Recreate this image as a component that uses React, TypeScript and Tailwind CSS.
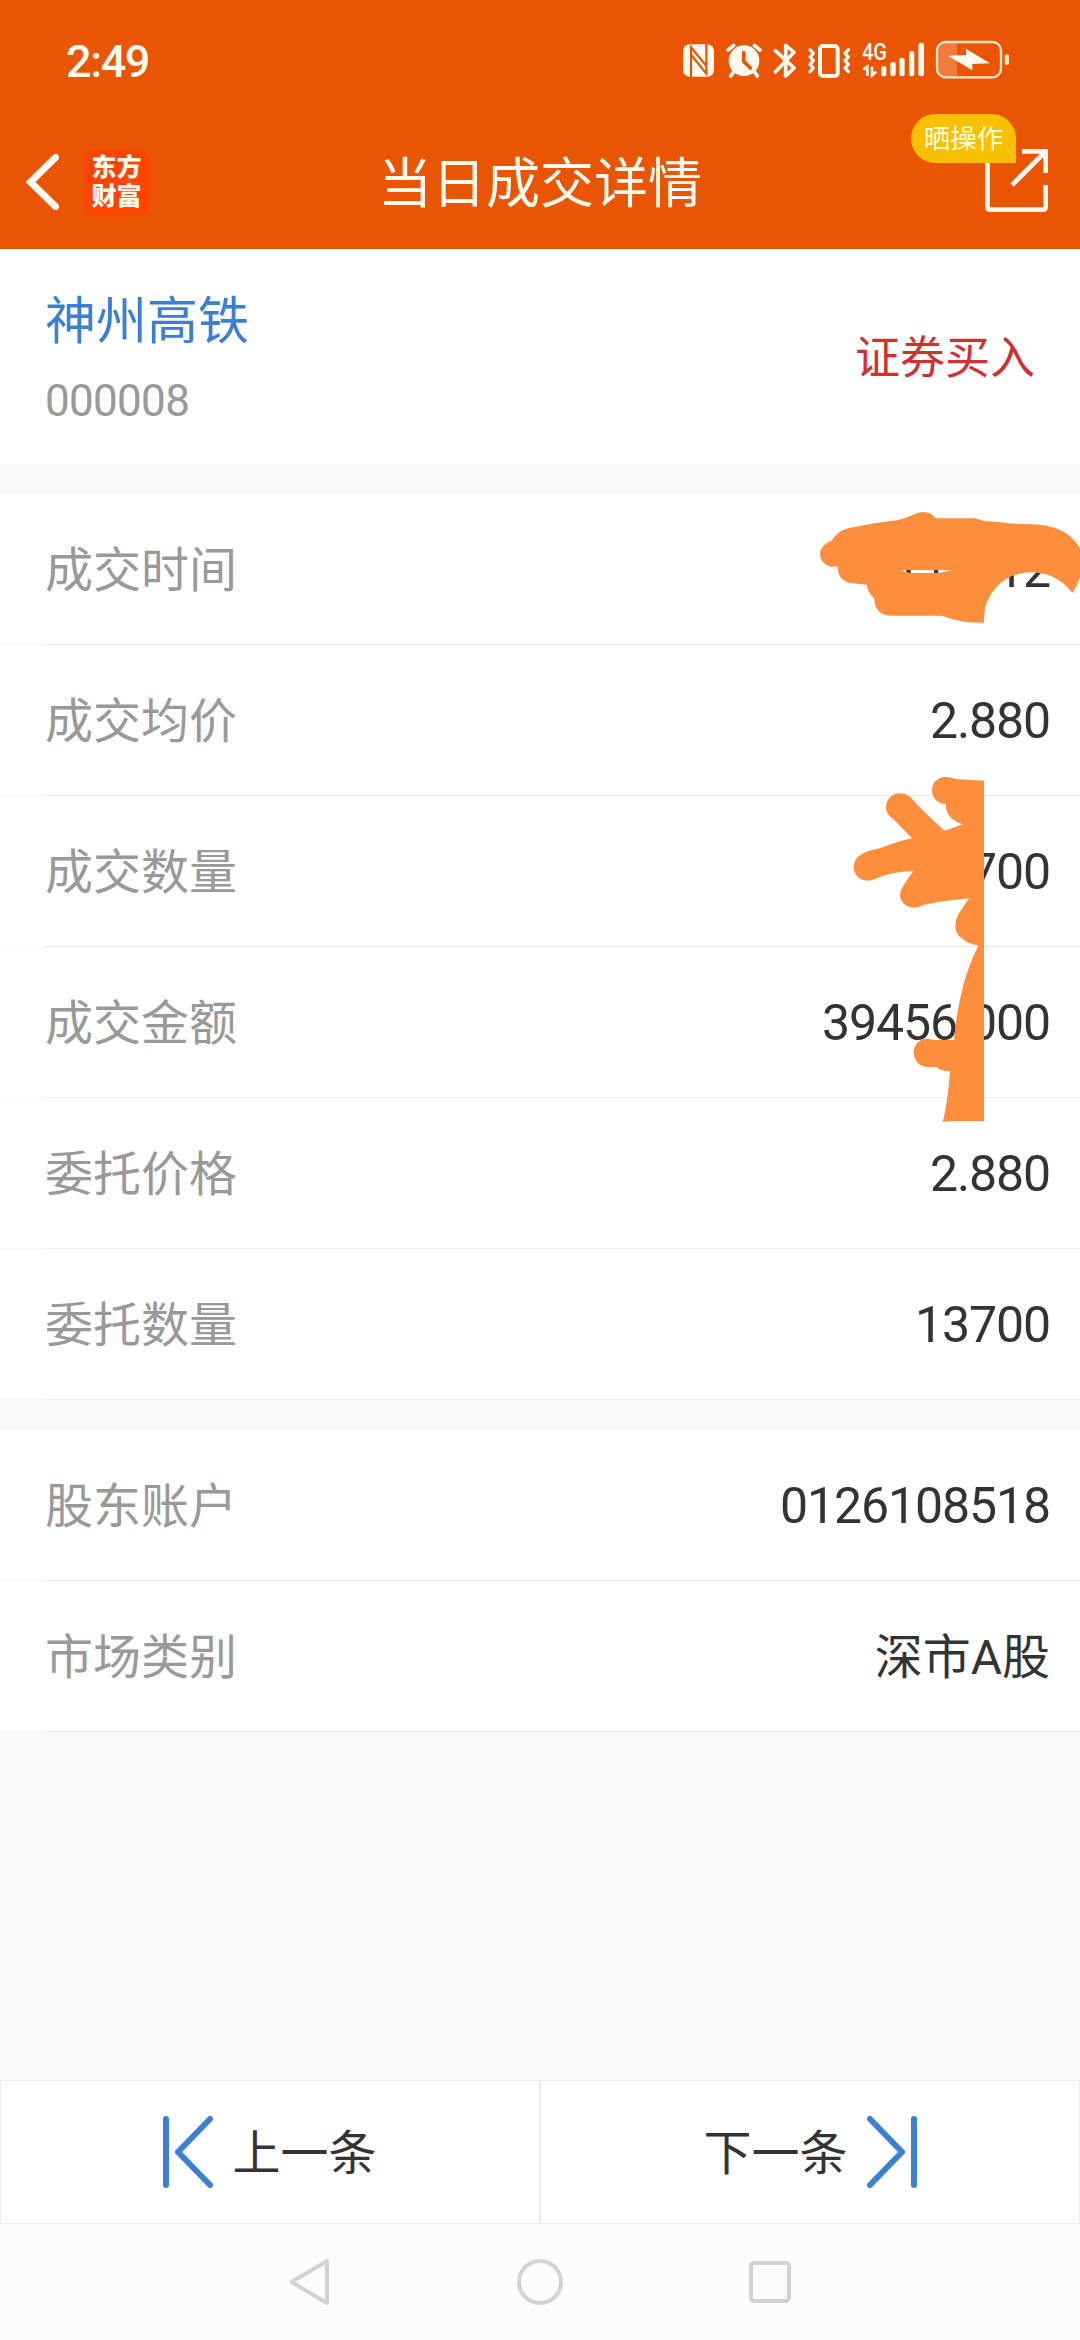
import type { ReactNode } from "react";
import clsx from "clsx";

const tradeRows = [
  { label: "成交时间", value: "11:05:12" },
  { label: "成交均价", value: "2.880" },
  { label: "成交数量", value: "13700" },
  { label: "成交金额", value: "39456.000" },
  { label: "委托价格", value: "2.880" },
  { label: "委托数量", value: "13700" },
];

const accountRows = [
  { label: "股东账户", value: "0126108518" },
  { label: "市场类别", value: "深市A股" },
];

const StatusIcons = () => (
  <div className="flex h-10 text-[#fffaf0]">
    {/* NFC */}
    <svg className="h-10 w-[38px]" viewBox="36 60 114 120">
      <rect x="39" y="73" width="93" height="97" rx="20" fill="currentColor" />
      <path d="M63 172V82l46 56V106M109 71v90L63 104V136" fill="none" stroke="#ea5504" strokeWidth="6.500" />
    </svg>
    {/* Alarm */}
    <svg className="h-10 w-12" viewBox="150 60 144 120">
      <circle cx="222" cy="122" r="46" fill="currentColor" />
      <path d="M174 90l17-14M270 90l-17-14M192 154l-10 14M252 154l10 14" stroke="currentColor" strokeWidth="11" strokeLinecap="round" />
      <path d="M221 98v26l20 20" fill="none" stroke="#ea5504" strokeWidth="11" strokeLinecap="round" />
    </svg>
    {/* Bluetooth */}
    <svg className="h-10 w-[34px]" viewBox="294 60 102 120">
      <path d="M316 92l56 52-25 24V76l25 21-56 59" fill="none" stroke="currentColor" strokeWidth="11" strokeLinecap="round" strokeLinejoin="round" />
    </svg>
    {/* Vibrate */}
    <svg className="h-10 w-[54px]" viewBox="396 60 162 120" fill="none" stroke="currentColor">
      <rect x="450" y="78" width="53" height="90" rx="9" strokeWidth="12" />
      <path d="M420 89l10 11-10 11 10 11-10 11 10 11-10 11M535 89l-10 11 10 11-10 11 10 11-10 11 10 11" strokeWidth="10" strokeLinecap="round" strokeLinejoin="round" />
    </svg>
    {/* Signal */}
    <svg className="h-10 w-[74px]" viewBox="558 60 222 120" fill="currentColor">
      <text x="576" y="119" fontSize="69" fontWeight="500" fontFamily="Roboto, sans-serif" textLength="75" lengthAdjust="spacingAndGlyphs">4G</text>
      <path d="M580 149l12-9v28M606 140v26l13-11" fill="none" stroke="currentColor" strokeWidth="8" />
      <rect x="633" y="138" width="16" height="31" rx="8" />
      <rect x="661" y="126" width="16" height="43" rx="7" />
      <rect x="688" y="113" width="16" height="56" rx="7" />
      <rect x="717" y="93" width="16" height="76" rx="7" />
      <rect x="745" y="68" width="17" height="101" rx="7" />
    </svg>
    {/* Battery */}
    <svg className="h-10 w-20" viewBox="780 60 240 120">
      <path d="M861 68H826Q802 68 802 92V146Q802 170 826 170H861Z" fill="#f07c3c" />
      <rect x="801" y="66" width="192" height="106" rx="26" fill="none" stroke="#ffe9cc" strokeWidth="7" />
      <rect x="1004" y="103" width="13" height="32" rx="6" fill="#ffe9cc" />
      <path d="M834 107L888 105V86L960 130L907 132V151Z" fill="currentColor" />
    </svg>
  </div>
);

const ShareIcon = () => (
  <svg className="h-[66px] w-[66px]" viewBox="0 0 66 66" fill="none" stroke="#fffaf0" strokeWidth="4.8">
    <path d="M4.4 5V58q0 2.600 2.600 2.600H60q2.600 0 2.600 -2.600V36" />
    <path d="M39 2.400H62.600V24M62 3L29 36" />
  </svg>
);

const SkipIcon = ({ flip = false }: { flip?: boolean }) => (
  <svg
    className={clsx("h-[72px] w-[50px]", flip && "-scale-x-100")}
    viewBox="0 0 50 72"
    fill="none"
    stroke="#3d7fd5"
    strokeWidth="6"
    strokeLinecap="round"
    strokeLinejoin="round"
  >
    <path d="M3 3v66M47 3L15 36l32 33" />
  </svg>
);

const Row = ({ label, value }: { label: string; value: string }) => (
  <div className="h-[151px] bg-white">
    <div className="flex h-[150px] items-center justify-between pl-[45px] pr-[30px]">
      <span className="pt-[3px] text-[48px] text-[#999999]">{label}</span>
      <span
        className={clsx(
          "text-[#333333]",
          /^[\d.:]+$/.test(value) ? "pt-[2px] text-[50px] tracking-[-1.1px]" : "pt-[3px] text-[48px]"
        )}
      >
        {value}
      </span>
    </div>
    <div className="flex h-px">
      <div className="w-[45px] bg-[#f7f7f7]"></div>
      <div className="flex-1 bg-[#ebebeb]"></div>
    </div>
  </div>
);

const PagerButton = ({ children }: { children: ReactNode }) => (
  <button className="flex flex-1 items-center justify-center gap-[19px] border border-[#e9ebec] bg-white text-[48px] text-[#333333]">
    {children}
  </button>
);

const App = () => {
  return (
    <div className="relative flex h-[2340px] w-[1080px] flex-col overflow-hidden bg-[#f7f8fa] font-[Roboto,'Noto_Sans_CJK_SC',sans-serif] leading-none">
      <header className="h-[249px] bg-[#ea5504] text-[#fffaf0]">
        <div className="flex h-[115px] items-center justify-between pl-[66px] pr-[70px] pt-[5px]">
          <span className="pt-[2px] text-[45px] font-medium tracking-[-1.4px]">2:49</span>
          <StatusIcons />
        </div>
        <div className="grid h-[134px] grid-cols-[1fr_auto_1fr] items-center">
          <div className="flex items-center pl-[25px]">
            <svg className="h-[56px] w-[34px]" viewBox="0 0 34 56" fill="none" stroke="currentColor" strokeWidth="7">
              <path d="M30.500 3.500L5.500 28l25 24.500" strokeLinecap="round" />
            </svg>
            <div className="ml-6 flex h-[67px] w-[67px] flex-col items-center justify-center rounded-[14px] bg-[#ff4400] text-[25px] font-black leading-[29px]">
              <span>东方</span>
              <span>财富</span>
            </div>
          </div>
          <h1 className="pt-[5px] text-[54px]">当日成交详情</h1>
          <div className="relative flex justify-end pr-[31px]">
            <ShareIcon />
            <span className="absolute -top-[35px] right-[64px] flex h-[49px] w-[105px] items-center justify-center rounded-[25px] rounded-br-none bg-[#f9c000] pt-[2px] text-[26.500px] text-[#fffde0]">
              晒操作
            </span>
          </div>
        </div>
      </header>

      <section className="flex h-[215px] items-center justify-between bg-white px-[45px]">
        <div className="flex flex-col gap-[32px] pt-[5px]">
          <span className="text-[51px] text-[#3b7fd4]">神州高铁</span>
          <span className="text-[44px] tracking-[-0.7px] text-[#999999]">000008</span>
        </div>
        <span className="pt-[4px] text-[45px] text-[#d22f2f]">证券买入</span>
      </section>

      <section className="mt-[30px]">
        {tradeRows.map((row) => (
          <Row key={row.label} {...row} />
        ))}
      </section>

      <section className="mt-[30px]">
        {accountRows.map((row) => (
          <Row key={row.label} {...row} />
        ))}
      </section>

      <div className="mt-auto flex h-[144px]">
        <PagerButton>
          <SkipIcon />
          <span className="pt-[3px]">上一条</span>
        </PagerButton>
        <PagerButton>
          <span className="pt-[3px]">下一条</span>
          <SkipIcon flip />
        </PagerButton>
      </div>

      <nav className="flex h-[116px] items-center justify-center gap-[186px] bg-[#fcfcfc]">
        <svg className="h-12 w-[42px]" viewBox="0 0 42 48" fill="none" stroke="#d2d2d2" strokeWidth="4" strokeLinejoin="round">
          <path d="M38 3L2.500 24L38 45Z" />
        </svg>
        <div className="h-[46px] w-[46px] rounded-full border-4 border-[#d2d2d2]"></div>
        <div className="h-[42px] w-[42px] rounded-[5px] border-4 border-[#d2d2d2]"></div>
      </nav>

      {/* Marker strokes over the private values */}
      <svg className="pointer-events-none absolute left-[780px] top-[490px] h-[160px] w-[300px]" viewBox="0 0 900 480">
        <path
          fill="#ff8e3c"
          fillRule="evenodd"
          d="M155 152Q172 122 205 115Q270 100 355 90Q390 79 412 69Q445 58 467 85L585 85Q600 88 610 93Q650 95 700 101L755 103Q860 105 900 175L900 260Q890 290 877 309Q830 248 755 247Q690 247 650 290Q608 335 612 398Q560 398 545 394Q515 388 485 377L335 377Q285 377 283 327Q262 305 260 284L210 279Q172 270 173 229Q160 231 152 230Q120 220 120 191Q120 165 155 152ZM367 240Q375 249 400 249L470 249Q495 247 513 241Z"
        />
      </svg>
      <svg className="pointer-events-none absolute left-[780px] top-[680px] h-[460px] w-[300px]" viewBox="0 0 900 1380">
        <path
          fill="#ff8e3c"
          d="M612 302L525 297Q515 291 496 291C470 291 456 310 456 332C456 355 475 371 497 372Q495 415 548 433L494 452Q430 397 395 355Q380 340 358 340C335 340 318 360 318 383Q318 403 340 417L396 475Q350 485 300 505Q260 512 240 525Q221 540 221 562C221 585 240 602 262 602Q275 602 290 595Q330 575 400 574Q385 592 375 610Q360 630 360 645C360 665 378 683 402 683Q415 683 430 675Q460 668 500 662L567 655Q550 680 535 703Q526 720 526 737Q526 760 545 775Q570 795 595 796Q565 860 550 915Q530 990 522 1080L460 1080Q450 1076 440 1076C418 1076 401 1095 401 1117C401 1140 418 1161 442 1161L470 1161Q482 1174 510 1174Q503 1270 488 1326L515 1323L612 1323Z"
        />
      </svg>
    </div>
  );
};

export default App;
